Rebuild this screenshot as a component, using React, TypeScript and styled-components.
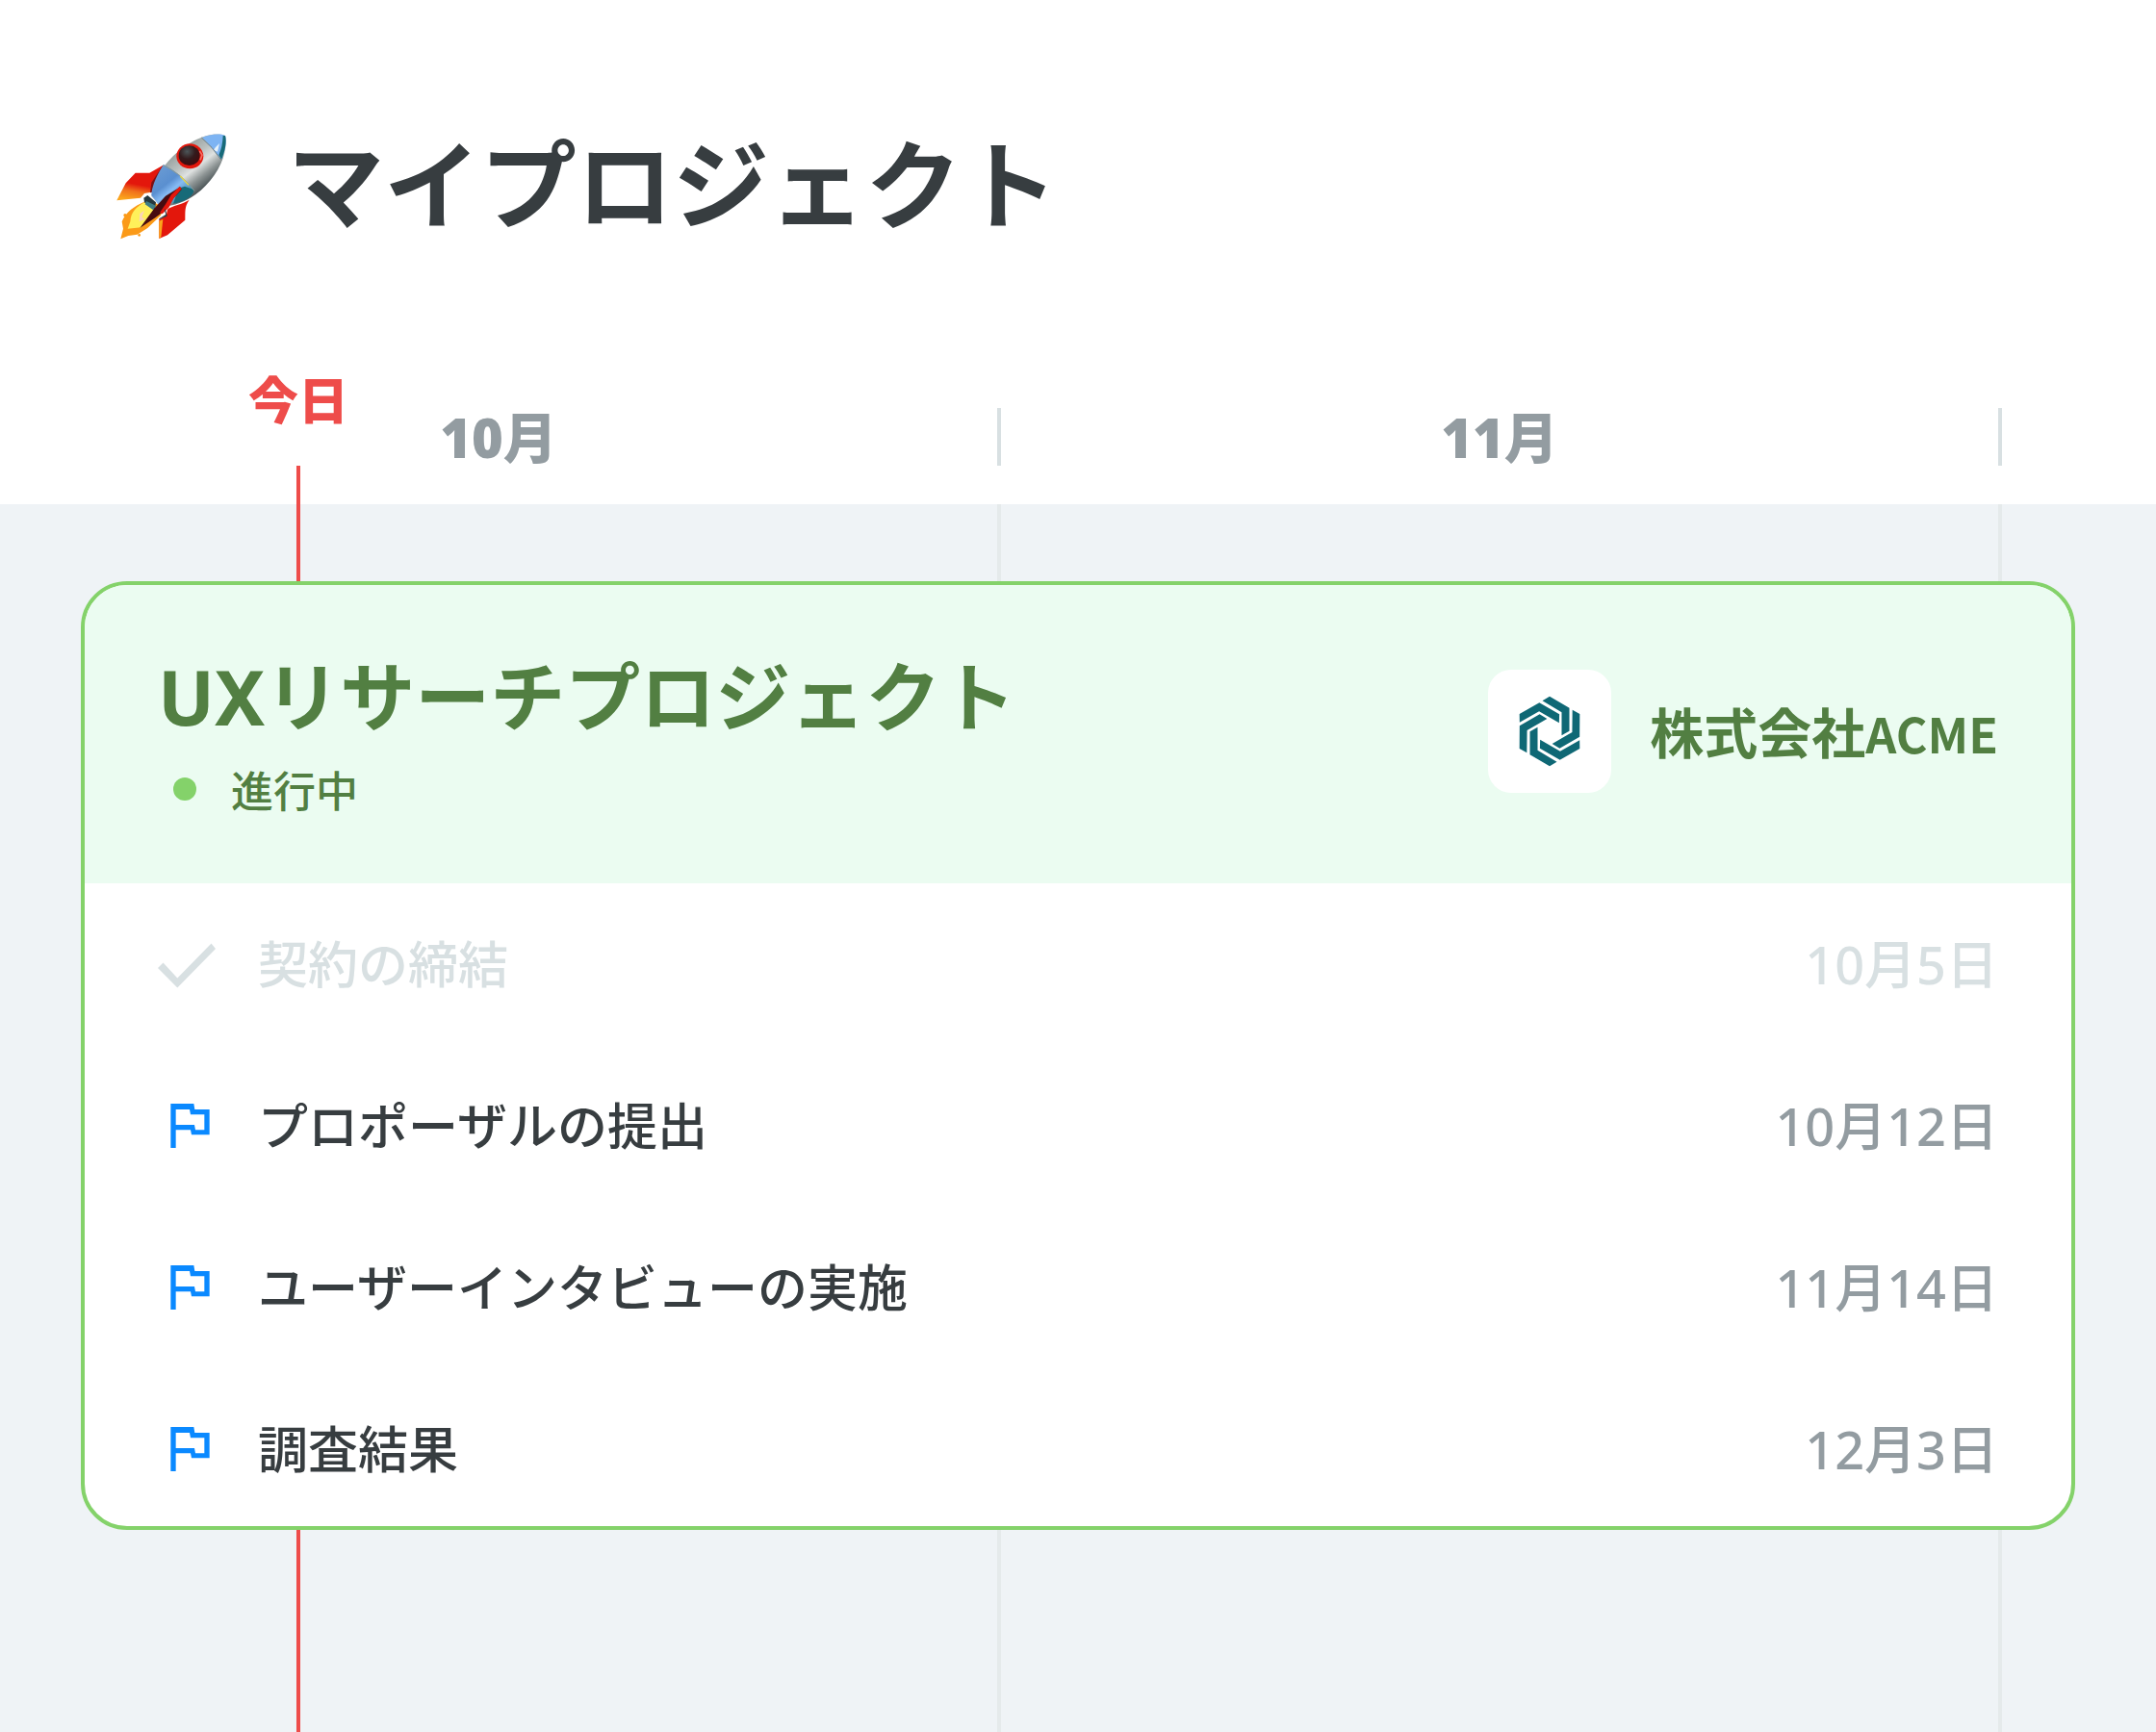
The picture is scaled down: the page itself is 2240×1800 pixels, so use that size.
import React from "react";
import styled, { createGlobalStyle } from "styled-components";

const sans = `"Noto Sans", "Noto Sans CJK JP", sans-serif`;
const cjk = `"Noto Sans CJK JP", sans-serif`;

const color = {
  ink: "#373d40",
  muted: "#939ca1",
  faint: "#d8e0e2",
  canvas: "#eff3f6",
  rule: "#e5eaeb",
  green: "#84d26a",
  greenDark: "#527f42",
  greenPale: "#ebfcf1",
  red: "#ee4c4a",
  blue: "#0a89ff",
  teal: "#0f6875",
};

const GlobalStyle = createGlobalStyle`
  *, *::before, *::after { box-sizing: border-box; }
  body { margin: 0; background: #fff; font-family: ${sans}; color: ${color.ink}; }
  h1, h2, p, ul { margin: 0; padding: 0; }
`;

const Page = styled.main`
  display: flex;
  flex-direction: column;
  min-height: 100vh;
`;

const PageHeader = styled.header`
  display: flex;
  align-items: flex-end;
  gap: 62px;
  padding: 124px 120px 130px;
`;

const PageTitle = styled.h1`
  font-family: ${cjk};
  font-size: 100px;
  line-height: 126px;
  font-weight: 700;
`;

const Timeline = styled.section`
  position: relative;
  flex: 1;
  display: flex;
  flex-direction: column;
`;

const MonthGrid = styled.div`
  display: grid;
  grid-template-columns: 13fr 13fr 2fr;
`;

const Months = styled(MonthGrid)`
  padding: 44px 0 40px;
`;

const Month = styled.div`
  height: 60px;
  line-height: 60px;
  border-right: 4px solid ${color.faint};
  text-align: center;
  font-size: 56px;
  font-weight: 900;
  color: ${color.muted};
`;

const Canvas = styled.div`
  flex: 1;
  display: grid;
  background: ${color.canvas};
`;

const Rules = styled(MonthGrid)`
  grid-area: 1 / 1;
`;

const Rule = styled.div`
  border-right: 4px solid ${color.rule};
`;

const Today = styled.div`
  position: absolute;
  top: 0;
  bottom: 0;
  left: 13.84%;
  transform: translateX(-50%);
  display: flex;
  flex-direction: column;
  align-items: center;
  gap: 36px;
`;

const TodayLabel = styled.span`
  font-family: ${cjk};
  font-size: 52px;
  line-height: 68px;
  font-weight: 900;
  color: ${color.red};
`;

const TodayLine = styled.div`
  flex: 1;
  width: 4px;
  background: ${color.red};
`;

const Card = styled.article`
  grid-area: 1 / 1;
  align-self: start;
  position: relative;
  z-index: 1;
  margin: 80px 84px;
  border: 4px solid ${color.green};
  border-radius: 48px;
  overflow: hidden;
  background: #fff;
`;

const CardHeader = styled.header`
  display: flex;
  align-items: center;
  justify-content: space-between;
  padding: 60px 76px 66px;
  background: ${color.greenPale};
  color: ${color.greenDark};
`;

const Heading = styled.div`
  display: flex;
  flex-direction: column;
  gap: 8px;
`;

const ProjectTitle = styled.h2`
  font-size: 78px;
  line-height: 112px;
  font-weight: 700;
`;

const Status = styled.p`
  display: flex;
  align-items: center;
  gap: 36px;
  padding-left: 16px;
  font-family: ${cjk};
  font-size: 44px;
  line-height: 64px;
  font-weight: 500;
`;

const Dot = styled.span`
  width: 24px;
  height: 24px;
  border-radius: 50%;
  background: ${color.green};
`;

const Client = styled.div`
  display: flex;
  align-items: center;
  gap: 40px;
`;

const ClientName = styled.p`
  font-family: ${cjk};
  font-size: 56px;
  line-height: 80px;
  font-weight: 700;
`;

const Latin = styled.span`
  font-size: 50px;
`;

const LogoTile = styled.div`
  display: flex;
  align-items: center;
  justify-content: center;
  width: 128px;
  height: 128px;
  border-radius: 24px;
  background: #fff;
`;

const Tasks = styled.ul`
  display: flex;
  flex-direction: column;
  gap: 96px;
  padding: 48px 76px 44px;
  list-style: none;
`;

const TaskRow = styled.li<{ $done: boolean }>`
  display: flex;
  align-items: center;
  gap: 44px;
  line-height: 72px;
  font-weight: 500;
  color: ${p => (p.$done ? color.faint : color.ink)};
`;

const TaskName = styled.span`
  flex: 1;
  font-size: 52px;
`;

const TaskDate = styled.time<{ $done: boolean }>`
  font-size: 54px;
  color: ${p => (p.$done ? color.faint : color.muted)};
`;

const Rocket = () => (
  <svg width="117" height="113" viewBox="60 50 351 339" aria-hidden="true">
    <defs>
      <linearGradient id="hull" x1="0.3" y1="0.2" x2="0.75" y2="0.75">
        <stop offset="0" stopColor="#8d9896" />
        <stop offset="0.35" stopColor="#b9bfbe" />
        <stop offset="0.55" stopColor="#dfe2e1" />
        <stop offset="0.75" stopColor="#8d9494" />
        <stop offset="1" stopColor="#3b4548" />
      </linearGradient>
      <linearGradient id="fin" x1="0.6" y1="0" x2="0.35" y2="1">
        <stop offset="0.55" stopColor="#e3170c" />
        <stop offset="0.75" stopColor="#f0701b" />
        <stop offset="1" stopColor="#fba51b" />
      </linearGradient>
      <linearGradient id="panel" x1="0" y1="0" x2="0.8" y2="1">
        <stop offset="0" stopColor="#6f9fd4" />
        <stop offset="0.45" stopColor="#5a8fd0" />
        <stop offset="0.6" stopColor="#86bbf4" />
        <stop offset="1" stopColor="#176a78" />
      </linearGradient>
      <radialGradient id="glass" cx="0.4" cy="0.3" r="0.75">
        <stop offset="0" stopColor="#4b5558" />
        <stop offset="0.5" stopColor="#331a1c" />
        <stop offset="1" stopColor="#43090c" />
      </radialGradient>
    </defs>
    <path d="M150 268C120 280 92 300 80 330L84 352L76 384L100 374L128 370L160 350L200 312L212 290L170 262Z" fill="#fb9a18" />
    <path d="M150 270C125 284 108 300 106 330L98 352L140 348L190 305L180 280Z" fill="#fff05a" />
    <path d="M134 330L136 305L150 295L142 316L152 322Z" fill="#fbd3bd" />
    <circle cx="90" cy="310" r="5" fill="#fb9a18" />
    <circle cx="134" cy="372" r="4" fill="#fb9a18" />
    <path d="M208 154L166 178H122L92 210L64 264L138 256L150 242L172 238Z" fill="url(#fin)" />
    <path d="M208 154L172 208L168 240L178 238L212 165Z" fill="#7b1014" />
    <path d="M290 262C270 276 235 280 222 292L218 312L196 324V383L222 372L277 325C278 300 274 285 290 262Z" fill="#e3170c" />
    <path d="M196 328L208 322L202 378L196 383Z" fill="#fba51b" />
    <path d="M402 62C375 52 340 60 305 78C255 105 215 145 195 185C180 212 172 235 172 252L198 282C235 285 275 270 310 245C355 212 390 160 400 115C406 90 406 72 402 62Z" fill="url(#hull)" />
    <path d="M330 68C355 57 385 54 402 62C407 82 402 110 390 136Q360 98 330 68Z" fill="#7db4f3" />
    <path d="M402 62C407 82 402 110 390 136L382 122Q394 95 395 62Z" fill="#176a78" />
    <path d="M372 98L384 86L378 112L366 106Z" fill="#e6f2fb" />
    <path d="M210 152C238 166 278 196 304 230C300 248 270 268 238 272L200 284L172 248C174 214 192 180 210 152Z" fill="url(#panel)" />
    <path d="M304 230C306 250 275 268 240 274L256 226L276 220Z" fill="#176a78" />
    <path d="M208 154Q262 178 306 234" fill="none" stroke="#8c9992" strokeWidth="3" />
    <path d="M262 188L288 216" stroke="#ecd83d" strokeWidth="4" />
    <path d="M328 68Q362 96 390 138" fill="none" stroke="#6f7f82" strokeWidth="3" />
    <path d="M148 256L160 248L186 270L182 292L150 270Z" fill="#26383c" />
    <path d="M156 266L186 280L178 294L152 276Z" fill="#3d7c84" />
    <path d="M262 222L216 250L180 290L136 350L186 316L208 300L236 262L266 230Z" fill="#470b0f" />
    <path d="M260 220L234 246L216 276L198 302L206 306L226 286L242 256L266 228Z" fill="#e3170c" />
    <path d="M196 322L218 308L214 292L220 312Z" fill="#26383c" stroke="#26383c" strokeWidth="2" />
    <ellipse cx="292" cy="126" rx="42" ry="39" fill="#e3170c" />
    <ellipse cx="290" cy="124" rx="33" ry="31" fill="url(#glass)" />
    <path d="M322 110L330 122L324 138" fill="none" stroke="#f66c62" strokeWidth="5" />
  </svg>
);

const blade = "0,-108.5 61.5,-72.5 61.5,-0.5 37.5,12.5 37.5,-59.5 -22.5,-95";
const bladeAngles = [0, 60, 120, 180, 240, 300];

const AcmeLogo = () => (
  <svg width="64" height="74" viewBox="-96 -111 192 222" role="img" aria-label="ACME">
    {bladeAngles.map(angle => (
      <polygon key={angle} points={blade} fill={color.teal} transform={`rotate(${angle})`} />
    ))}
  </svg>
);

const CheckIcon = () => (
  <svg width="60" height="60" viewBox="0 0 60 60" aria-hidden="true">
    <path d="M5.5 28.5L0 34L20.3 54.5L60 14L55.5 8.5L20.3 44.5Z" fill={color.faint} />
  </svg>
);

const FlagIcon = () => (
  <svg width="60" height="60" viewBox="282 81 180 180" aria-hidden="true">
    <path
      d="M322 102H394L397 120H443V199H387L384 184H338V240H322ZM338 120V168H396L399 184H427V136H384L381 120Z"
      fill={color.blue}
      fillRule="evenodd"
    />
  </svg>
);

const months = ["10月", "11月"];

const tasks = [
  { name: "契約の締結", date: "10月5日", iso: "10-05", done: true },
  { name: "プロポーザルの提出", date: "10月12日", iso: "10-12", done: false },
  { name: "ユーザーインタビューの実施", date: "11月14日", iso: "11-14", done: false },
  { name: "調査結果", date: "12月3日", iso: "12-03", done: false },
];

export default function App() {
  return (
    <Page lang="ja">
      <GlobalStyle />
      <PageHeader>
        <Rocket />
        <PageTitle>マイプロジェクト</PageTitle>
      </PageHeader>
      <Timeline>
        <Months>
          {months.map(month => (
            <Month key={month}>{month}</Month>
          ))}
        </Months>
        <Canvas>
          <Rules aria-hidden="true">
            {months.map(month => (
              <Rule key={month} />
            ))}
          </Rules>
          <Card>
            <CardHeader>
              <Heading>
                <ProjectTitle>UXリサーチプロジェクト</ProjectTitle>
                <Status>
                  <Dot />
                  進行中
                </Status>
              </Heading>
              <Client>
                <LogoTile>
                  <AcmeLogo />
                </LogoTile>
                <ClientName>
                  株式会社<Latin>ACME</Latin>
                </ClientName>
              </Client>
            </CardHeader>
            <Tasks>
              {tasks.map(task => (
                <TaskRow key={task.name} $done={task.done}>
                  {task.done ? <CheckIcon /> : <FlagIcon />}
                  <TaskName>{task.name}</TaskName>
                  <TaskDate dateTime={task.iso} $done={task.done}>
                    {task.date}
                  </TaskDate>
                </TaskRow>
              ))}
            </Tasks>
          </Card>
        </Canvas>
        <Today>
          <TodayLabel>今日</TodayLabel>
          <TodayLine />
        </Today>
      </Timeline>
    </Page>
  );
}
